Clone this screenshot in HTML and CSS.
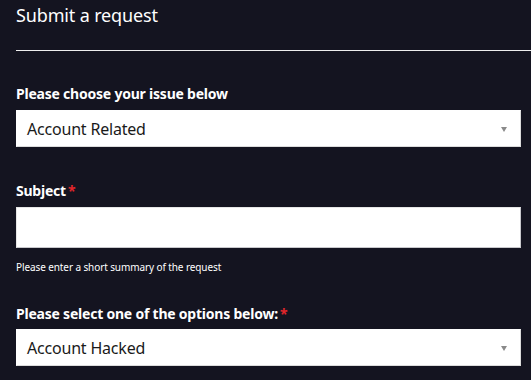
FILE: index.html
```html
<!DOCTYPE html>
<html lang="en">
<head>
<meta charset="utf-8">
<title>Submit a request</title>
<link rel="stylesheet" href="styles.css">
</head>
<body>
<main class="page">
  <h1 class="title">Submit a request</h1>
  <form class="form">
    <div class="field">
      <label class="label">Please choose your issue below</label>
      <div class="select">
        <span class="select-value">Account Related</span>
        <span class="arrow"></span>
      </div>
    </div>
    <div class="field field-subject">
      <label class="label">Subject<span class="req">*</span></label>
      <div class="input"></div>
      <p class="hint">Please enter a short summary of the request</p>
    </div>
    <div class="field field-options">
      <label class="label">Please select one of the options below:<span class="req">*</span></label>
      <div class="select">
        <span class="select-value">Account Hacked</span>
        <span class="arrow"></span>
      </div>
    </div>
  </form>
</main>
</body>
</html>
```
FILE: styles.css
```css
html, body {
  margin: 0;
  padding: 0;
  background: #141420;
  height: 100%;
  overflow: hidden;
}
.page {
  padding-left: 16px;
  font-family: "Noto Sans", "Open Sans", sans-serif;
  color: #fff;
}
.title {
  margin: 0;
  padding: 3px 0 23px;
  font-size: 18px;
  font-weight: 400;
  line-height: 24px;
  letter-spacing: -0.15px;
  border-bottom: 1px solid #eeeeee;
}
.form {
  padding-right: 10px;
}
.field {
  display: flex;
  flex-direction: column;
}
.label {
  display: block;
  font-weight: 700;
  font-size: 14px;
  line-height: 18px;
  letter-spacing: -0.22px;
  margin-top: 34px;
  margin-bottom: 7px;
}
.field-subject .label { margin-top: 35px; margin-bottom: 7px; }
.field-options .label { margin-top: 31px; margin-bottom: 6px; }
.req {
  color: #e0262b;
  margin-left: 2px;
}
.select {
  height: 37px;
  box-sizing: border-box;
  background: #fff;
  border: 1px solid #dcdcdc;
  border-top-color: #fff;
  border-left-color: #fff;
  display: flex;
  align-items: center;
  justify-content: space-between;
  padding: 0 13px 0 10px;
}
.select-value {
  color: #1a1a1a;
  font-size: 16px;
  letter-spacing: -0.2px;
}
.arrow {
  width: 0;
  height: 0;
  border-left: 3px solid transparent;
  border-right: 3px solid transparent;
  border-top: 5px solid #8a8a8a;
  margin-top: 2px;
}
.input {
  height: 41px;
  box-sizing: border-box;
  background: #fff;
  border: 1px solid #c8c8cc;
  border-top-color: #e6e6e6;
  border-left-color: #e6e6e6;
}
.hint {
  margin: 12px 0 0;
  font-size: 10px;
  line-height: 14px;
  letter-spacing: -0.1px;
  color: #fff;
}
```
